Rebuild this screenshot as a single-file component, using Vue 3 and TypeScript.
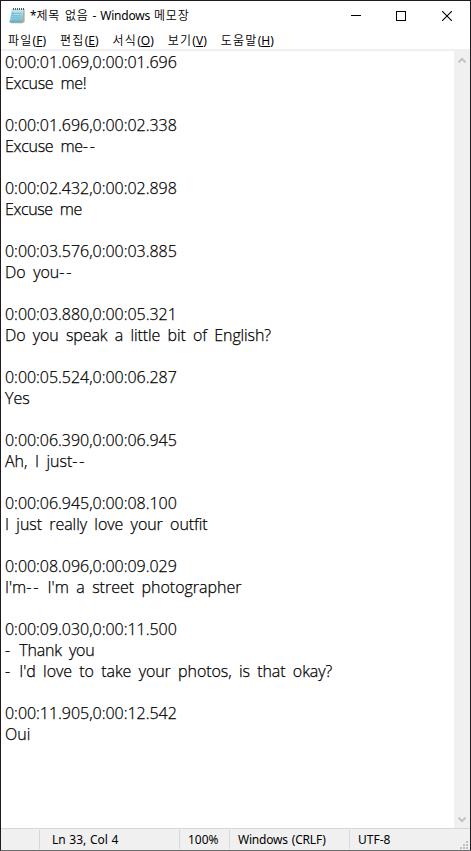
<script setup lang="ts">
interface Line {
  text: string
  tracking: number
}

interface Cue {
  time: string
  lines: Line[]
}

const menus = [
  { label: '파일', key: 'F' },
  { label: '편집', key: 'E' },
  { label: '서식', key: 'O' },
  { label: '보기', key: 'V' },
  { label: '도움말', key: 'H' },
]

const cues: Cue[] = [
  { time: '0:00:01.069,0:00:01.696', lines: [{ text: 'Excuse me!', tracking: -0.3 }] },
  { time: '0:00:01.696,0:00:02.338', lines: [{ text: 'Excuse me--', tracking: -0.3 }] },
  { time: '0:00:02.432,0:00:02.898', lines: [{ text: 'Excuse me', tracking: -0.4 }] },
  { time: '0:00:03.576,0:00:03.885', lines: [{ text: 'Do you--', tracking: 0 }] },
  { time: '0:00:03.880,0:00:05.321', lines: [{ text: 'Do you speak a little bit of English?', tracking: -0.11 }] },
  { time: '0:00:05.524,0:00:06.287', lines: [{ text: 'Yes', tracking: 0 }] },
  { time: '0:00:06.390,0:00:06.945', lines: [{ text: 'Ah, I just--', tracking: 0 }] },
  { time: '0:00:06.945,0:00:08.100', lines: [{ text: 'I just really love your outfit', tracking: -0.07 }] },
  { time: '0:00:08.096,0:00:09.029', lines: [{ text: "I'm-- I'm a street photographer", tracking: -0.01 }] },
  {
    time: '0:00:09.030,0:00:11.500',
    lines: [
      { text: '- Thank you', tracking: -0.2 },
      { text: "- I'd love to take your photos, is that okay?", tracking: -0.08 },
    ],
  },
  { time: '0:00:11.905,0:00:12.542', lines: [{ text: 'Oui', tracking: 0 }] },
]

// Splits a line so that hyphens can be spaced more widely than letters.
const parts = (line: string): string[] => line.split(/(-+)/).filter(Boolean)
</script>

<template>
  <div class="window">
    <header class="titlebar">
      <svg class="app-icon" width="16" height="17" viewBox="0 0 16 17">
        <path d="M3.5 2.5H15.6V14.5L13.5 16.3H2z" fill="#b9a98b" />
        <path d="M3 2H14.5L13.3 15.5H.5z" fill="#8fcbdc" />
        <path d="M3 2H14.5L14.2 5H2.4z" fill="#bce2ea" />
        <path d="M6 5H14.2L13.8 9H4z" fill="#a8d8e4" />
        <path d="M.8 13.5H13.5L13.3 15.5H.5z" fill="#63b0c8" />
        <path d="M3 6.5h10M2.7 8.5h10M2.4 10.5h10M2 12.5h10" stroke="#69b5cb" stroke-width=".6" />
        <path d="M4.5 1v2M6.5 1v2M8.5 1v2M10.5 1v2M12.5 1v2M14.5 1v2" stroke="#4c5b60" stroke-width="1" />
      </svg>
      <h1 class="title">*<span class="ko">제목 없음</span> - Windows <span class="ko">메모장</span></h1>
      <div class="controls">
        <svg width="10" height="11" viewBox="0 0 10 11" shape-rendering="crispEdges"><path d="M0 5.5h10" stroke="#000" /></svg>
        <svg width="10" height="10" viewBox="0 0 10 10" shape-rendering="crispEdges"><rect x=".5" y=".5" width="9" height="9" fill="none" stroke="#000" /></svg>
        <svg width="10" height="10" viewBox="0 0 10 10"><path d="M0 0l10 10M10 0L0 10" stroke="#000" stroke-width="1.1" /></svg>
      </div>
    </header>
    <nav class="menubar">
      <span v-for="m in menus" :key="m.key" class="menu"><span class="ko">{{ m.label }}</span>(<u>{{ m.key }}</u>)</span>
    </nav>
    <main class="editor">
      <div class="document">
        <section v-for="cue in cues" :key="cue.time" class="cue">
          <p class="time">{{ cue.time }}</p>
          <p v-for="line in cue.lines" :key="line.text" class="line" :style="{ letterSpacing: line.tracking + 'px' }"><span v-for="(part, i) in parts(line.text)" :key="i" :class="{ dash: part.startsWith('-') }">{{ part }}</span></p>
        </section>
      </div>
      <aside class="scrollbar">
        <svg width="8" height="7" viewBox="0 0 8 7"><path d="M.5 5.3L4 1.8 7.5 5.3" fill="none" stroke="#bfbfbf" stroke-width="2" /></svg>
        <svg width="8" height="7" viewBox="0 0 8 7"><path d="M.5 1.7L4 5.2 7.5 1.7" fill="none" stroke="#bfbfbf" stroke-width="2" /></svg>
      </aside>
    </main>
    <footer class="status">
      <span class="cell blank"></span>
      <span class="cell position">Ln 33, Col 4</span>
      <span class="cell zoom">100%</span>
      <span class="cell ending">Windows (CRLF)</span>
      <span class="cell encoding">UTF-8</span>
      <svg class="grip" width="8" height="8" viewBox="0 0 8 8" fill="#bfbfbf" shape-rendering="crispEdges">
        <path d="M6 0h2v2h-2zM3 3h2v2h-2zM6 3h2v2h-2zM0 6h2v2h-2zM3 6h2v2h-2zM6 6h2v2h-2z" />
      </svg>
    </footer>
  </div>
</template>

<style>
body { margin: 0; overflow: hidden; }
</style>

<style scoped>
.window {
  box-sizing: border-box;
  width: 471px;
  height: 851px;
  display: flex;
  flex-direction: column;
  background: #fff;
  border: 1px solid #1e1a1f;
  border-bottom-color: #6b6b6b;
  color: #000;
  font-family: "Noto Sans", "Noto Sans CJK KR", sans-serif;
  font-size: 12px;
}
.titlebar {
  height: 29px;
  flex: none;
  display: flex;
  align-items: center;
  padding-left: 8px;
}
.title {
  margin: 0 0 0 5px;
  font-size: 12px;
  font-weight: 400;
  line-height: 28px;
  letter-spacing: -0.2px;
  word-spacing: 1px;
  white-space: nowrap;
}
.ko { font-weight: 350; letter-spacing: 0.8px; }
.controls {
  margin-left: auto;
  display: flex;
  align-items: center;
  gap: 35px;
  padding-right: 18px;
}
.controls svg:not(:last-child) { position: relative; left: -1px; }
.menubar {
  height: 19px;
  flex: none;
  box-sizing: border-box;
  display: flex;
  gap: 14px;
  padding: 1px 0 0 7px;
  line-height: 20px;
  white-space: nowrap;
}
.menu .ko { letter-spacing: 1.25px; }
.menu u { text-underline-offset: 1px; }
.editor {
  flex: 1;
  display: flex;
  min-height: 0;
  border-top: 2px solid #f0f0f0;
}
.document {
  flex: 1;
  display: flex;
  flex-direction: column;
  gap: 21px;
  padding: 1px 0 0 4px;
  font-family: "Open Sans", "Noto Sans", sans-serif;
  font-weight: 300;
  -webkit-text-stroke: 0.25px #000;
  font-size: 16px;
  line-height: 21px;
  white-space: nowrap;
}
.cue p { margin: 0; height: 21px; }
.time { letter-spacing: -0.03px; }
.line { word-spacing: 3.3px; }
.dash { letter-spacing: 1.8px; }
.scrollbar {
  width: 16px;
  background: #f0f0f0;
  display: flex;
  flex-direction: column;
  align-items: center;
  justify-content: space-between;
  padding: 6px 0 5px;
  box-sizing: border-box;
}
.status {
  height: 22px;
  flex: none;
  box-sizing: border-box;
  display: flex;
  border-top: 1px solid #d7d7d7;
  background: #f0f0f0;
  padding: 1px 0;
  line-height: 20px;
  white-space: nowrap;
  position: relative;
}
.cell { box-sizing: border-box; border-right: 1px solid #d7d7d7; height: 19px; }
.blank { width: 39px; }
.position { width: 140px; padding-left: 12px; word-spacing: 0.5px; }
.zoom { width: 50px; padding-left: 8px; }
.ending { width: 120px; padding-left: 8px; letter-spacing: -0.2px; word-spacing: 1px; }
.encoding { border: 0; padding-left: 8px; }
.grip { position: absolute; right: 2px; bottom: 1px; }
</style>
